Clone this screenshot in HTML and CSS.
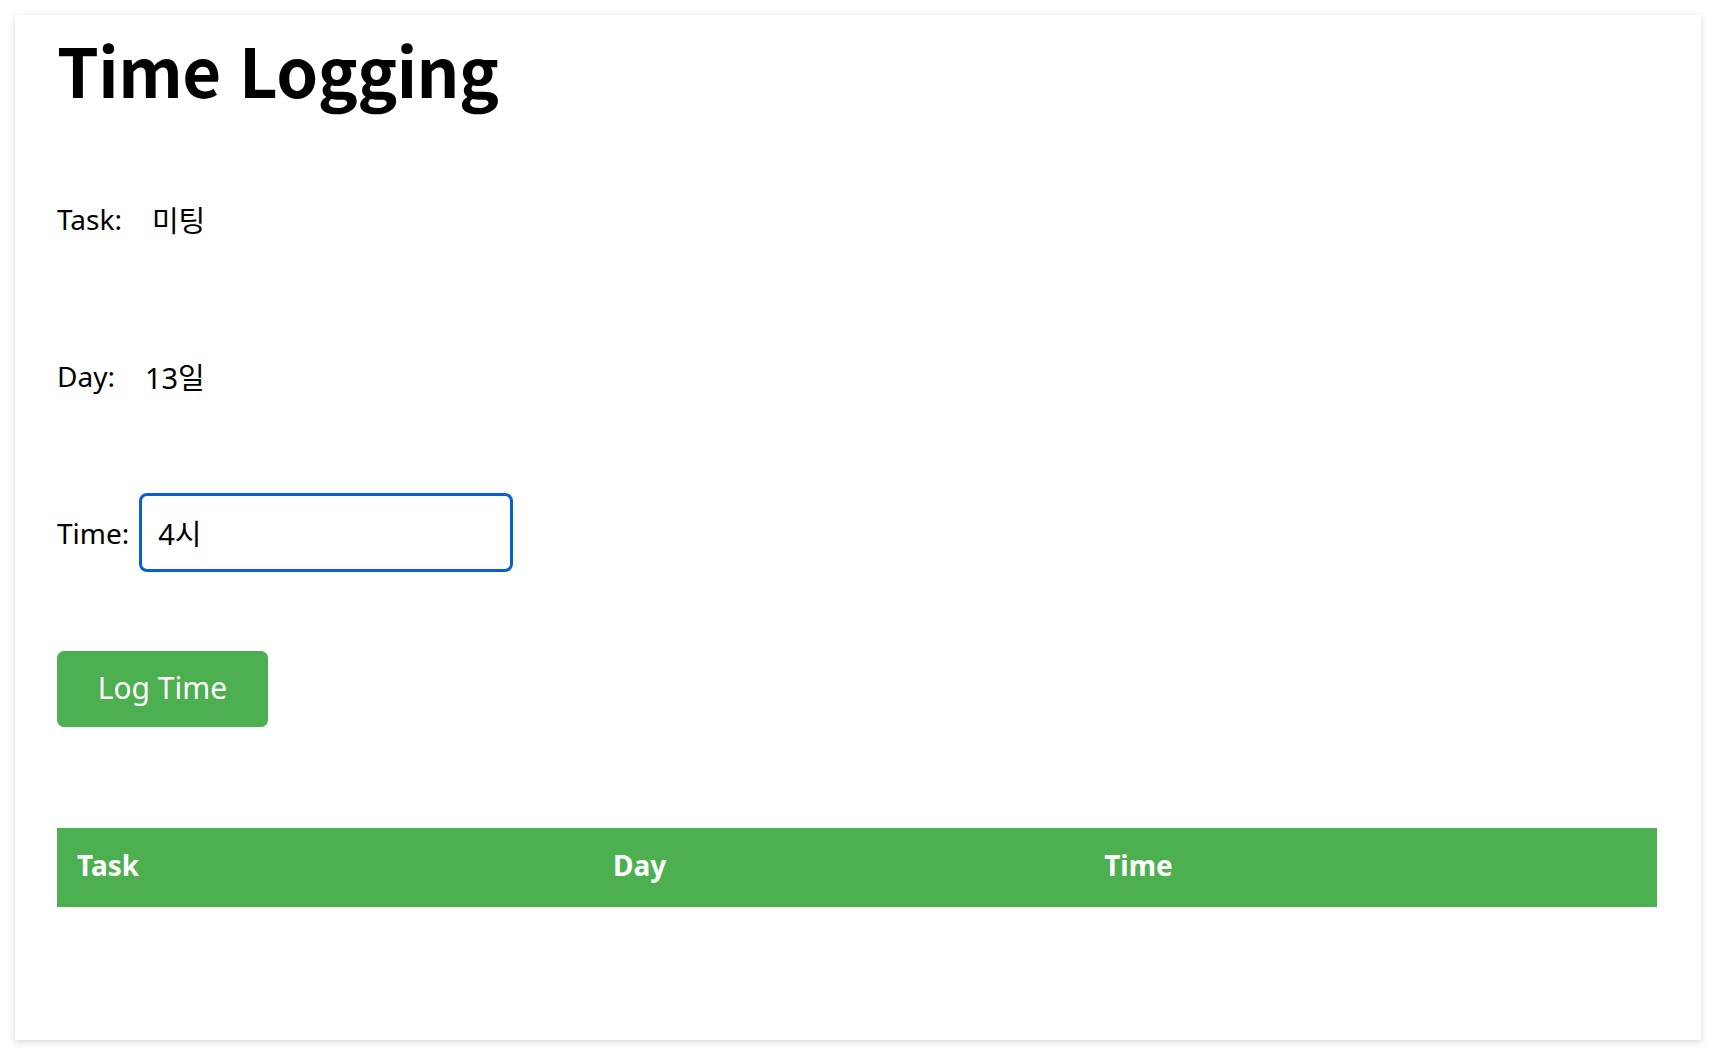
FILE: index.html
```html
<!DOCTYPE html>
<html lang="ko">
<head>
<meta charset="utf-8">
<title>Time Logging</title>
<link rel="stylesheet" href="styles.css">
</head>
<body>
<div class="card">
  <h1 class="title">Time Logging</h1>
  <div class="form">
    <div class="field">
      <span class="label">Task:</span>
      <span class="value">미팅</span>
    </div>
    <div class="field">
      <span class="label">Day:</span>
      <span class="value">13일</span>
    </div>
    <div class="field">
      <span class="label">Time:</span>
      <input class="input" type="text" value="4시">
    </div>
    <div class="actions">
      <button class="btn" type="button">Log Time</button>
    </div>
  </div>
  <table class="log">
    <colgroup>
      <col class="c-task">
      <col class="c-day">
      <col class="c-time">
    </colgroup>
    <thead>
      <tr><th>Task</th><th>Day</th><th>Time</th></tr>
    </thead>
    <tbody></tbody>
  </table>
</div>
</body>
</html>
```

FILE: styles.css
```css
html, body {
  margin: 0;
  padding: 0;
  background: #ffffff;
}
body {
  padding: 15px;
  font-family: "Noto Sans", "Noto Sans CJK KR", sans-serif;
  color: #000;
}
.card {
  background: #fff;
  box-shadow: 0 2px 7px rgba(0,0,0,0.16);
  height: 1025px;
  box-sizing: border-box;
  padding: 9px 44px 0 42px;
}
.title {
  margin: 0;
  font-family: "Noto Sans CJK KR", "Noto Sans", sans-serif;
  font-size: 67px;
  font-weight: 700;
  line-height: 90px;
  letter-spacing: -0.5px;
}
.form {
  display: flex;
  flex-direction: column;
  gap: 80px;
  margin-top: 66px;
}
.field {
  display: flex;
  align-items: center;
  height: 77px;
  font-size: 28px;
}
.label {
  margin-right: 10px;
}
.value {
  padding-left: 20px;
  font-size: 29px;
}
.input {
  box-sizing: border-box;
  width: 374px;
  height: 79px;
  border: 3px solid #0a5fd0;
  border-radius: 8px;
  padding: 0 16px 2px;
  font: inherit;
  font-size: 29px;
  outline: none;
  color: #000;
}
.actions {
  display: flex;
}
.btn {
  background: #4caf50;
  color: #fff;
  border: none;
  border-radius: 7px;
  width: 211px;
  height: 76px;
  padding: 0 0 3px;
  font-family: "Noto Sans", "Noto Sans CJK KR", sans-serif;
  font-size: 30px;
  cursor: pointer;
}
.log {
  width: 100%;
  border-collapse: collapse;
  margin-top: 101px;
}
.c-task { width: 33.5%; }
.c-day { width: 30.7%; }
.c-time { width: 35.8%; }
.log th {
  background: #4caf50;
  color: #fff;
  text-align: left;
  font-size: 28px;
  font-weight: 700;
  height: 79px;
  padding: 0 20px 5px;
  box-sizing: border-box;
}
```
